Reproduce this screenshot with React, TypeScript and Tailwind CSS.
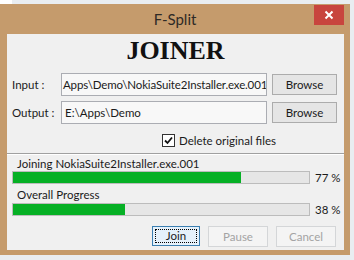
const font = { fontFamily: '"Segoe UI", Lato, "Liberation Sans", sans-serif' };

function WinButton({ label, disabled, focused, className }: { label: string; disabled?: boolean; focused?: boolean; className: string }) {
  if (focused) {
    return (
      <div className={`flex-none h-[20px] border border-[#3c7fb1] bg-[#e5f1fb] p-[2px] ${className}`}>
        <div className="h-full w-full border border-dotted border-black flex items-center justify-center text-[11.5px] text-[#1b1b1b] leading-none">
          {label}
        </div>
      </div>
    );
  }
  return (
    <div
      className={`flex-none h-[21px] border flex items-center justify-center text-[11.5px] leading-none ${
        disabled ? "h-[20px] border-[#d4d6d8] bg-[#f4f4f4] text-[#a3a3a3]" : "border-[#acacac] bg-[#e5e5e5] text-[#1b1b1b]"
      } ${className}`}
    >
      {label}
    </div>
  );
}

function Bar({ pct, label, className }: { pct: number; label: string; className: string }) {
  return (
    <div className={`flex-none flex items-center h-[13px] ${className}`}>
      <div className="ml-[5px] w-[298px] h-[13px] border border-[#bcbcbc] bg-[#e6e6e6]">
        <div className="h-full bg-[#06b025]" style={{ width: `${pct}%` }} />
      </div>
      <span className="ml-[5px] text-[11.5px] text-[#1b1b1b] leading-none">{label}</span>
    </div>
  );
}

export default function App() {
  return (
    <div className="w-[354px] h-[260px] bg-[#e9edf1] overflow-hidden" style={font}>
      <div className="h-[4px] w-[12px] bg-white" />
      <div className="w-[350px] h-[251px] bg-[#c59b6c] flex flex-col">
        {/* title bar */}
        <div className="flex-none h-[30px] relative flex items-center justify-center">
          <span className="text-[15px] text-[#2e2a26] mt-[1px]">F-Split</span>
          <div className="absolute right-[6px] top-[1px] w-[30px] h-[20px] bg-[#c8453e] flex items-center justify-center">
            <svg width="10" height="10" viewBox="0 0 10 10">
              <path d="M1.5 1.5 L8.5 8.5 M8.5 1.5 L1.5 8.5" stroke="white" strokeWidth="2" />
            </svg>
          </div>
        </div>
        {/* client */}
        <div className="flex-none ml-[7px] w-[337px] h-[216px] bg-[#f0f0f0] flex flex-col text-[#1b1b1b] text-[11.5px]">
          <div
            className="flex-none h-[33px] flex items-center justify-center text-[26px] font-bold text-[#111] leading-none pt-[1px]"
            style={{ fontFamily: '"Liberation Serif", serif' }}
          >
            JOINER
          </div>
          <div className="flex-none mt-[6px] flex items-center h-[23px]">
            <span className="ml-[5px] w-[49px]">Input :</span>
            <div className="w-[206px] h-[23px] border border-[#abadb3] bg-[#f8f8f8] flex items-center overflow-hidden pl-[1px]">
              <span className="whitespace-nowrap tracking-[-0.15px]">Apps\Demo\NokiaSuite2Installer.exe.001</span>
            </div>
            <WinButton label="Browse" className="ml-[5px] w-[65px]" />
          </div>
          <div className="flex-none mt-[5px] flex items-center h-[23px]">
            <span className="ml-[5px] w-[49px]">Output :</span>
            <div className="w-[206px] h-[23px] border border-[#abadb3] bg-[#f8f8f8] flex items-center overflow-hidden pl-[3px]">
              <span className="whitespace-nowrap">E:\Apps\Demo</span>
            </div>
            <WinButton label="Browse" className="ml-[5px] w-[65px]" />
          </div>
          <div className="flex-none mt-[10px] ml-[155px] flex items-center h-[13px]">
            <div className="w-[13px] h-[13px] border border-[#333] bg-white flex items-center justify-center">
              <svg width="9" height="9" viewBox="0 0 9 9">
                <path d="M1 4.5 L3.5 7 L8 1.5" stroke="#111" strokeWidth="1.8" fill="none" />
              </svg>
            </div>
            <span className="ml-[4px]">Delete original files</span>
          </div>
          <div className="flex-none mt-[6px] h-[2px] border-t border-[#a0a0a0] border-b border-b-white" />
          <div className="flex-none mt-[2px] ml-[10px] leading-[14px]">Joining NokiaSuite2Installer.exe.001</div>
          <Bar pct={77} label="77 %" className="mt-0" />
          <div className="flex-none mt-[4px] ml-[10px] leading-[14px]">Overall Progress</div>
          <Bar pct={38} label="38 %" className="mt-[1px]" />
          <div className="flex-none mt-[10px] flex">
            <WinButton label="Join" focused className="ml-[145px] w-[48px]" />
            <WinButton label="Pause" disabled className="ml-[8px] w-[60px]" />
            <WinButton label="Cancel" disabled className="ml-[8px] w-[60px]" />
          </div>
        </div>
      </div>
    </div>
  );
}
